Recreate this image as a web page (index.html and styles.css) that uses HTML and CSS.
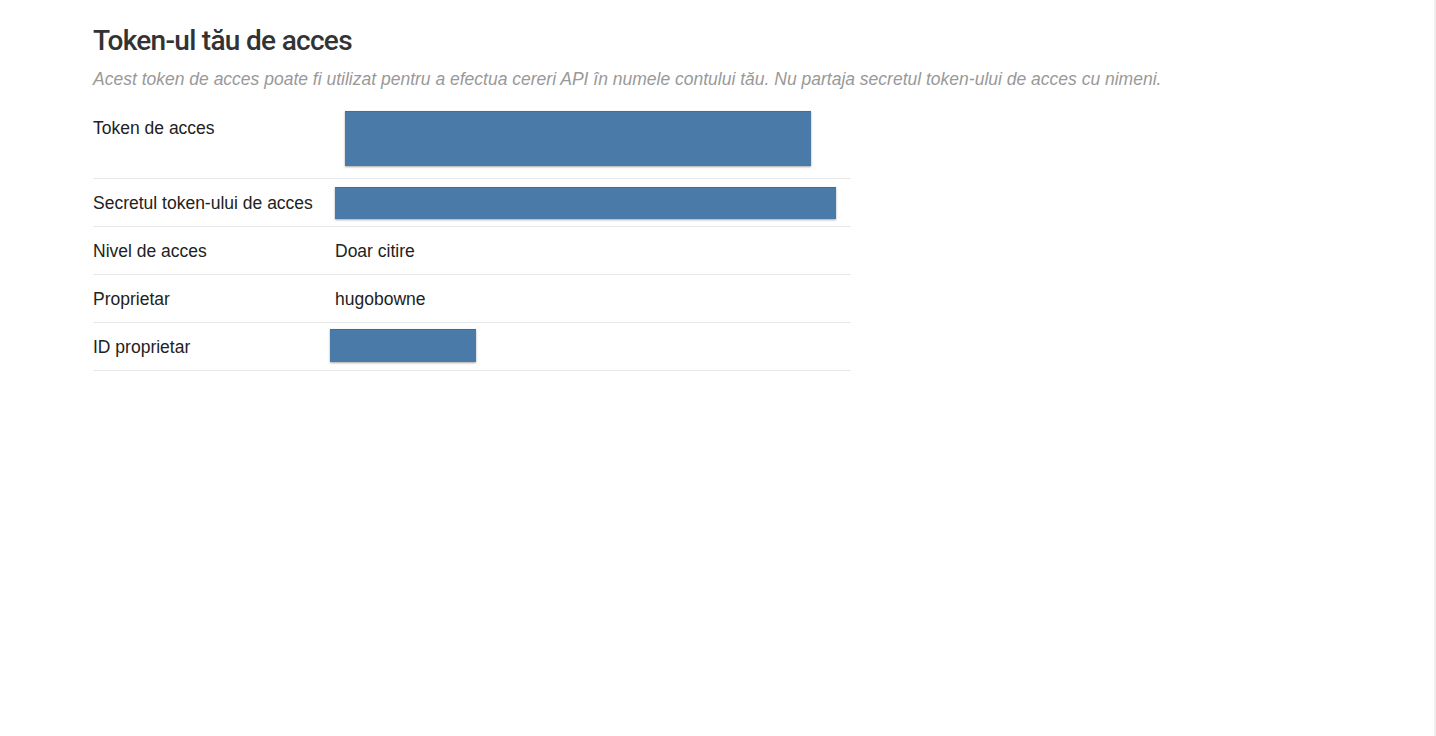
FILE: index.html
```html
<!DOCTYPE html>
<html lang="ro">
<head>
    <meta charset="UTF-8">
    <meta name="viewport" content="width=device-width, initial-scale=1.0">
    <title>Token-ul tău de acces</title>
    <link rel="stylesheet" href="styles.css">
</head>
<body>

<div class="page">
    <h1>Token-ul tău de acces</h1>
    <p class="lead">Acest token de acces poate fi utilizat pentru a efectua cereri API în numele contului tău. Nu partaja secretul token-ului de acces cu nimeni.</p>

    <table class="token-table">
        <tbody>
            <tr class="row-token">
                <th>Token de acces</th>
                <td><span class="redact redact-token"></span></td>
            </tr>
            <tr>
                <th>Secretul token-ului de acces</th>
                <td><span class="redact redact-secret"></span></td>
            </tr>
            <tr>
                <th>Nivel de acces</th>
                <td>Doar citire</td>
            </tr>
            <tr>
                <th>Proprietar</th>
                <td>hugobowne</td>
            </tr>
            <tr>
                <th>ID proprietar</th>
                <td><span class="redact redact-id"></span></td>
            </tr>
        </tbody>
    </table>
</div>

</body>
</html>
```

FILE: styles.css
```css
body {
    margin: 0;
    background-color: #fff;
    font-family: "Liberation Sans", Arial, sans-serif;
    color: #222;
    border-right: 2px solid #f0eeee;
    min-height: 736px;
    box-sizing: border-box;
}
.page {
    padding: 24px 93px 0;
}
h1 {
    font-family: Roboto, "Liberation Sans", sans-serif;
    font-weight: 500;
    font-size: 28px;
    line-height: 34px;
    letter-spacing: -0.7px;
    color: #333;
    margin: 0 0 9px;
}
.lead {
    font-style: italic;
    font-size: 17.5px;
    line-height: 24px;
    color: #999;
    margin: 0 0 13px;
}
.token-table {
    width: 758px;
    border-collapse: collapse;
}
.token-table th,
.token-table td {
    text-align: left;
    vertical-align: middle;
    font-weight: normal;
    font-size: 17.5px;
    line-height: 23px;
    padding: 13px 0 11px;
    border-bottom: 1px solid #e8e8e8;
    height: 23px;
}
.token-table th {
    width: 242px;
}
.row-token th {
    vertical-align: top;
}
.row-token td {
    padding: 7px 0 12px;
}
.redact {
    display: block;
    background-color: #4a7aa8;
    border-top: 1px solid #3f6d99;
    box-sizing: border-box;
    box-shadow: 0 1px 2px rgba(0, 0, 0, 0.35);
}
.redact-token {
    width: 466px;
    height: 55px;
    margin-left: 10px;
}
.redact-secret {
    width: 501px;
    height: 32px;
    margin: -5px 0 -4px;
}
.redact-id {
    width: 146px;
    height: 33px;
    margin: -7px 0 -3px -5px;
}
```
